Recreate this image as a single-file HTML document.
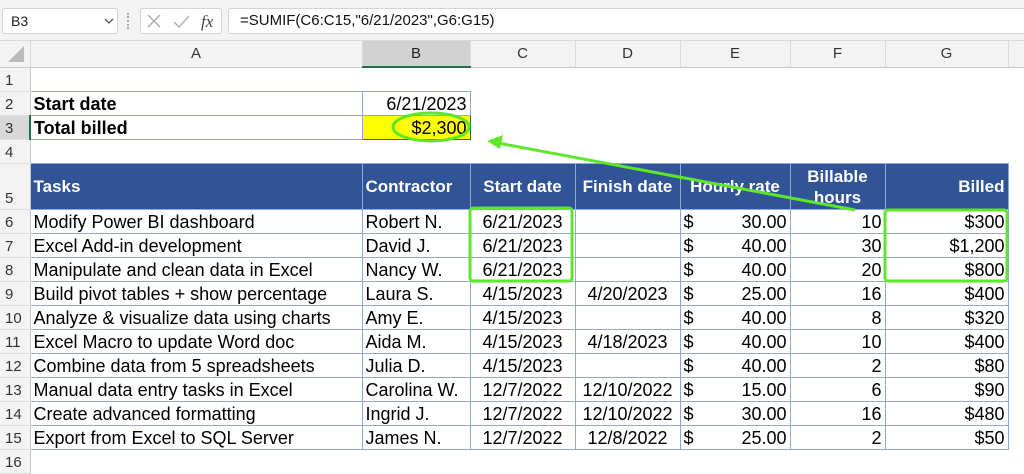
<!DOCTYPE html>
<html><head><meta charset="utf-8"><style>
body{margin:0;width:1024px;height:463px;overflow:hidden;background:#fff;font-family:"Liberation Sans",Arial,sans-serif;position:relative}
.fb{position:absolute;top:0;left:0;width:1024px;height:40px;background:#f3f3f3;border-bottom:1px solid #dadada}
.box{position:absolute;background:#fff;border:1px solid #d4d4d4;border-radius:3px;box-sizing:border-box}
table{position:absolute;top:41px;left:0;width:1024px;border-collapse:collapse;table-layout:fixed;font-size:18px;color:#000}
td{padding:0 3px;white-space:nowrap;overflow:hidden;height:23px;line-height:20px}
td.rh{background:#f3f3f3;color:#333;font-size:15px;text-align:left;padding:0 0 0 5px;vertical-align:bottom;border-right:1px solid #c8c8c8;border-bottom:1px solid #e0e0e0}
tr.ch td{background:#f3f3f3;text-align:center;font-size:15px;color:#333;height:25px;border-right:1px solid #dadada;border-bottom:1px solid #c8c8c8}
.b{border:1px solid #8ea9db}
.r{text-align:right}
.h td.hd{background:#305496;color:#fff;font-weight:bold;border:1px solid #8ea9db;font-size:17px;height:45px}
.c{text-align:center}
</style></head><body>
<div class="fb">
<div class="box" style="left:2px;top:8px;width:116px;height:26px;font-size:14px;line-height:24px;padding-left:8px;color:#222">B3<svg style="position:absolute;left:101px;top:9px" width="10" height="7"><path d="M1 1l4 4 4-4" stroke="#555" fill="none" stroke-width="1.3"/></svg></div>
<div style="position:absolute;left:127px;top:13px;width:2px;height:16px;border-left:2px dotted #aaa"></div>
<div class="box" style="left:140px;top:8px;width:82px;height:26px">
<svg width="80" height="24"><path d="M7 6l12 12M19 6L7 18" stroke="#aaa" stroke-width="1.3"/><path d="M33 13l5 5 10-11" stroke="#aaa" stroke-width="1.3" fill="none"/><text x="60" y="18" font-family="Liberation Serif" font-style="italic" font-size="17" fill="#444">fx</text></svg></div>
<div class="box" style="left:228px;top:8px;width:800px;height:26px;font-size:15px;line-height:24px;padding-left:11px;color:#111">=SUMIF(C6:C15,"6/21/2023",G6:G15)</div>
</div>
<table>
<colgroup><col style="width:30px"><col style="width:332px"><col style="width:108px"><col style="width:105px"><col style="width:105px"><col style="width:110px"><col style="width:95px"><col style="width:123px"><col style="width:16px"></colgroup>
<tr class="ch"><td style="background:#f3f3f3;padding:0"><svg width="20" height="20" style="display:block;margin-left:6px"><path d="M18 2V18H2Z" fill="#bbb"/></svg></td><td>A</td><td style="background:#d2d2d2;border-bottom:2px solid #217346;color:#222">B</td><td>C</td><td>D</td><td>E</td><td>F</td><td>G</td><td></td></tr>
<tr><td class="rh">1</td><td colspan="8"></td></tr>
<tr><td class="rh">2</td><td class="b" style="font-weight:bold">Start date</td><td class="b r">6/21/2023</td><td colspan="6"></td></tr>
<tr><td class="rh" style="background:#d8d8d8;border-right:2px solid #217346">3</td><td class="b" style="font-weight:bold">Total billed</td><td class="b r" style="background:#ffff00;border:1px solid #217346">$2,300</td><td colspan="6"></td></tr>
<tr><td class="rh">4</td><td colspan="8"></td></tr>
<tr class="h"><td class="rh">5</td><td class="hd">Tasks</td><td class="hd">Contractor</td><td class="hd c">Start date</td><td class="hd c">Finish date</td><td class="hd c">Hourly rate</td><td class="hd c" style="white-space:normal;line-height:21px;padding:0">Billable hours</td><td class="hd r">Billed</td><td></td></tr>
<tr><td class="rh">6</td><td class="b">Modify Power BI dashboard</td><td class="b">Robert N.</td><td class="b c">6/21/2023</td><td class="b c"></td><td class="b">$<span style="float:right">30.00</span></td><td class="b r">10</td><td class="b r">$300</td><td></td></tr>
<tr><td class="rh">7</td><td class="b">Excel Add-in development</td><td class="b">David J.</td><td class="b c">6/21/2023</td><td class="b c"></td><td class="b">$<span style="float:right">40.00</span></td><td class="b r">30</td><td class="b r">$1,200</td><td></td></tr>
<tr><td class="rh">8</td><td class="b">Manipulate and clean data in Excel</td><td class="b">Nancy W.</td><td class="b c">6/21/2023</td><td class="b c"></td><td class="b">$<span style="float:right">40.00</span></td><td class="b r">20</td><td class="b r">$800</td><td></td></tr>
<tr><td class="rh">9</td><td class="b">Build pivot tables + show percentage</td><td class="b">Laura S.</td><td class="b c">4/15/2023</td><td class="b c">4/20/2023</td><td class="b">$<span style="float:right">25.00</span></td><td class="b r">16</td><td class="b r">$400</td><td></td></tr>
<tr><td class="rh">10</td><td class="b">Analyze &amp; visualize data using charts</td><td class="b">Amy E.</td><td class="b c">4/15/2023</td><td class="b c"></td><td class="b">$<span style="float:right">40.00</span></td><td class="b r">8</td><td class="b r">$320</td><td></td></tr>
<tr><td class="rh">11</td><td class="b">Excel Macro to update Word doc</td><td class="b">Aida M.</td><td class="b c">4/15/2023</td><td class="b c">4/18/2023</td><td class="b">$<span style="float:right">40.00</span></td><td class="b r">10</td><td class="b r">$400</td><td></td></tr>
<tr><td class="rh">12</td><td class="b">Combine data from 5 spreadsheets</td><td class="b">Julia D.</td><td class="b c">4/15/2023</td><td class="b c"></td><td class="b">$<span style="float:right">40.00</span></td><td class="b r">2</td><td class="b r">$80</td><td></td></tr>
<tr><td class="rh">13</td><td class="b">Manual data entry tasks in Excel</td><td class="b">Carolina W.</td><td class="b c">12/7/2022</td><td class="b c">12/10/2022</td><td class="b">$<span style="float:right">15.00</span></td><td class="b r">6</td><td class="b r">$90</td><td></td></tr>
<tr><td class="rh">14</td><td class="b">Create advanced formatting</td><td class="b">Ingrid J.</td><td class="b c">12/7/2022</td><td class="b c">12/10/2022</td><td class="b">$<span style="float:right">30.00</span></td><td class="b r">16</td><td class="b r">$480</td><td></td></tr>
<tr><td class="rh">15</td><td class="b">Export from Excel to SQL Server</td><td class="b">James N.</td><td class="b c">12/7/2022</td><td class="b c">12/8/2022</td><td class="b">$<span style="float:right">25.00</span></td><td class="b r">2</td><td class="b r">$50</td><td></td></tr>
<tr><td class="rh">16</td><td colspan="8"></td></tr>
</table>
<svg style="position:absolute;left:0;top:0" width="1024" height="463">
<g stroke="#5ee62a" stroke-width="3" fill="none">
<ellipse cx="431" cy="127" rx="38" ry="14"/>
<rect x="470" y="208" width="102" height="73" rx="3"/>
<rect x="885" y="210" width="122" height="71" rx="3"/>
<path d="M855 210L498 143"/>
</g>
<path d="M487 141L503 135L500 149Z" fill="#5ee62a"/>
</svg>
</body></html>
